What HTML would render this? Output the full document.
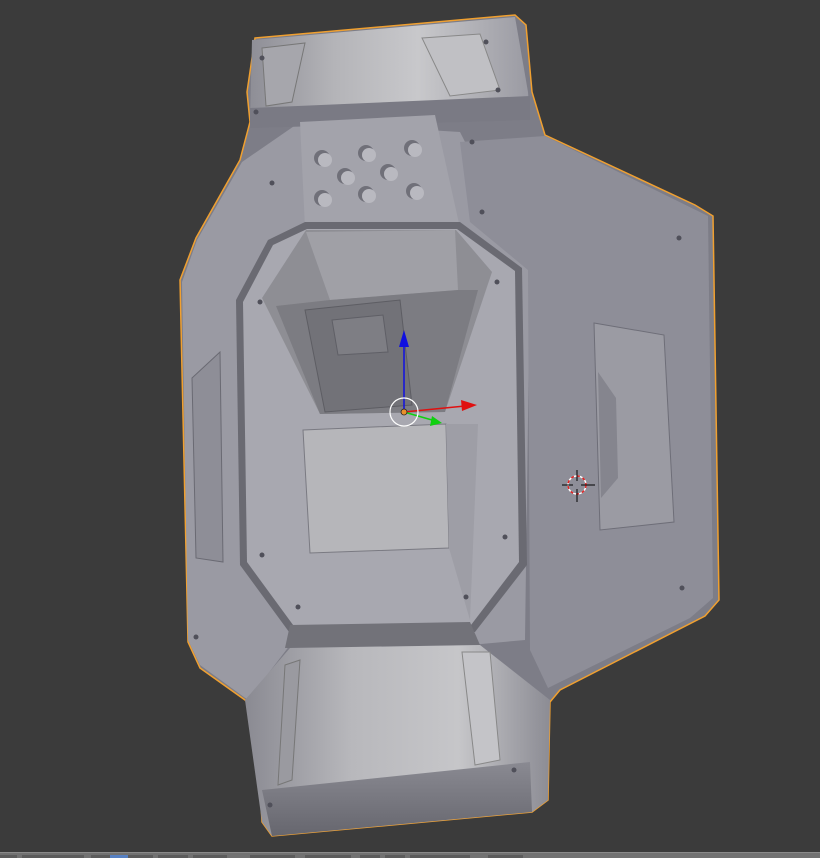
<!DOCTYPE html>
<html><head><style>
html,body{margin:0;padding:0;background:#3b3b3b;width:820px;height:858px;overflow:hidden}
svg{display:block}
</style></head><body>
<svg width="820" height="858" viewBox="0 0 820 858" xmlns="http://www.w3.org/2000/svg">
<defs>
<linearGradient id="cap" x1="0" x2="1" y1="0" y2="0">
<stop offset="0" stop-color="#8e8e96"/><stop offset="0.3" stop-color="#b4b4b8"/><stop offset="0.6" stop-color="#c8c8cb"/><stop offset="1" stop-color="#9a9aa2"/></linearGradient>
<linearGradient id="cap2" x1="0" x2="1" y1="0" y2="0">
<stop offset="0" stop-color="#8a8a92"/><stop offset="0.35" stop-color="#b8b8bc"/><stop offset="0.7" stop-color="#c6c6c9"/><stop offset="1" stop-color="#8c8c94"/></linearGradient>
<linearGradient id="band" x1="0" x2="0" y1="0" y2="1">
<stop offset="0" stop-color="#8a8a92"/><stop offset="1" stop-color="#66666e"/></linearGradient>
</defs>
<rect width="820" height="858" fill="#3b3b3b"/>
<polygon points="255,38 515,15 526,25 532,92 545,135 695,205 713,216 719,600 705,616 560,690 550,702 548,800 532,812 272,836 262,822 256,712 245,700 200,668 188,642 180,280 196,238 240,160 250,122 247,92" fill="#7d7d87" stroke="#f0a030" stroke-width="1.5"/>
<polygon points="182,282 197,240 242,162 300,122 460,132 530,270 525,640 470,645 290,645 248,700 200,665 188,640" fill="#9a9aa3"/>
<polygon points="460,142 545,136 708,216 713,598 690,618 548,688 530,650 528,270 470,222" fill="#8e8e98"/>
<polygon points="594,323 664,335 674,522 600,530" fill="#9b9ba3" stroke="#6e6e78"/>
<polygon points="598,372 616,398 618,478 601,498" fill="#85858e"/>
<polygon points="192,378 220,352 223,562 196,558" fill="#8e8e97" stroke="#6a6a73"/>
<polygon points="252,40 515,17 528,92 530,120 250,122" fill="url(#cap)"/>
<polygon points="262,48 305,43 292,102 266,106" fill="#a6a6ac" stroke="#777"/>
<polygon points="422,38 480,34 500,90 450,96" fill="#c0c0c4" stroke="#888"/>
<polygon points="250,108 530,96 530,120 250,128" fill="#7a7a84"/>
<polygon points="300,122 435,115 460,228 305,228" fill="#a3a3ab"/>
<g fill="#707079">
<circle cx="322" cy="158" r="8"/><circle cx="366" cy="153" r="8"/><circle cx="412" cy="148" r="8"/>
<circle cx="345" cy="176" r="8"/><circle cx="388" cy="172" r="8"/>
<circle cx="322" cy="198" r="8"/><circle cx="366" cy="194" r="8"/><circle cx="414" cy="191" r="8"/>
</g>
<g fill="#b9b9c0">
<circle cx="325" cy="160" r="7"/><circle cx="369" cy="155" r="7"/><circle cx="415" cy="150" r="7"/>
<circle cx="348" cy="178" r="7"/><circle cx="391" cy="174" r="7"/>
<circle cx="325" cy="200" r="7"/><circle cx="369" cy="196" r="7"/><circle cx="417" cy="193" r="7"/>
</g>
<polygon points="236,300 268,240 305,222 460,222 522,268 527,565 475,632 292,636 240,565" fill="#6a6a72"/>
<polygon points="243,302 273,245 307,229 457,229 515,271 519,562 471,625 296,629 247,562" fill="#a8a8b0"/>
<polygon points="262,298 306,230 456,230 492,272 445,412 320,414" fill="#8e8e94"/>
<polygon points="306,232 455,230 458,290 330,300" fill="#a0a0a6"/>
<polygon points="276,306 330,300 458,290 478,290 445,412 320,414" fill="#7c7c82"/>
<polygon points="305,310 400,300 412,405 325,412" fill="#727278" stroke="#5d5d63"/>
<polygon points="332,320 383,315 388,352 338,355" fill="#7e7e84" stroke="#5f5f66"/>
<polygon points="303,430 446,424 449,548 310,553" fill="#b6b6ba" stroke="#7a7a82"/>
<polygon points="446,424 478,424 470,620 449,548" fill="#9e9ea6"/>
<polygon points="290,625 470,622 480,645 285,648" fill="#727279"/>
<polygon points="245,700 290,648 480,645 550,700 548,800 532,812 272,836 262,822" fill="url(#cap2)"/>
<polygon points="262,790 530,762 532,812 272,836" fill="url(#band)"/>
<polygon points="285,665 300,660 292,780 278,785" fill="#9a9aa0" stroke="#777"/>
<polygon points="462,652 490,652 500,760 475,765" fill="#c4c4c8" stroke="#888"/>
<g fill="#50505a">
<circle cx="272" cy="183" r="2.5"/><circle cx="482" cy="212" r="2.5"/><circle cx="679" cy="238" r="2.5"/>
<circle cx="497" cy="282" r="2.5"/><circle cx="260" cy="302" r="2.5"/><circle cx="262" cy="555" r="2.5"/>
<circle cx="505" cy="537" r="2.5"/><circle cx="298" cy="607" r="2.5"/><circle cx="466" cy="597" r="2.5"/>
<circle cx="682" cy="588" r="2.5"/><circle cx="196" cy="637" r="2.5"/><circle cx="486" cy="42" r="2.5"/>
<circle cx="262" cy="58" r="2.5"/><circle cx="498" cy="90" r="2.5"/><circle cx="256" cy="112" r="2.5"/>
<circle cx="514" cy="770" r="2.5"/><circle cx="270" cy="805" r="2.5"/><circle cx="472" cy="142" r="2.5"/>
</g>
<line x1="404" y1="412" x2="404" y2="340" stroke="#1010e0" stroke-width="1.5"/>
<polygon points="404,330 399,347 409,347" fill="#1010e0"/>
<line x1="404" y1="412" x2="465" y2="406" stroke="#e01010" stroke-width="1.5"/>
<polygon points="477,405 461,400 462,411" fill="#e01010"/>
<line x1="404" y1="412" x2="432" y2="420" stroke="#10d010" stroke-width="1.5"/>
<polygon points="442,423 432,416 430,426" fill="#10d010"/>
<circle cx="404" cy="412" r="14" fill="none" stroke="#fff" stroke-width="1.2"/>
<circle cx="404" cy="412" r="3" fill="#e8902a" stroke="#222" stroke-width="0.8"/>
<circle cx="577" cy="485" r="9" fill="none" stroke="#fff" stroke-width="1.5"/>
<circle cx="577" cy="485" r="9" fill="none" stroke="#e02020" stroke-width="1.5" stroke-dasharray="3 3"/>
<line x1="562" y1="485" x2="573" y2="485" stroke="#000"/><line x1="581" y1="485" x2="595" y2="485" stroke="#000"/>
<line x1="577" y1="470" x2="577" y2="481" stroke="#000"/><line x1="577" y1="489" x2="577" y2="502" stroke="#000"/>
<rect x="0" y="852" width="820" height="6" fill="#727272"/>
<rect x="0" y="852" width="820" height="1" fill="#8a8a8a"/>
<g fill="#5c5c5c">
<rect x="0" y="855" width="17" height="3"/><rect x="22" y="855" width="62" height="3"/><rect x="91" y="855" width="62" height="3"/>
<rect x="158" y="855" width="30" height="3"/><rect x="193" y="855" width="34" height="3"/>
<rect x="250" y="855" width="45" height="3"/><rect x="305" y="855" width="46" height="3"/><rect x="360" y="855" width="20" height="3"/>
<rect x="385" y="855" width="20" height="3"/><rect x="410" y="855" width="60" height="3"/><rect x="488" y="855" width="35" height="3"/>
</g>
<rect x="110" y="855" width="18" height="3" fill="#5680c2"/>
</svg>
</body></html>
